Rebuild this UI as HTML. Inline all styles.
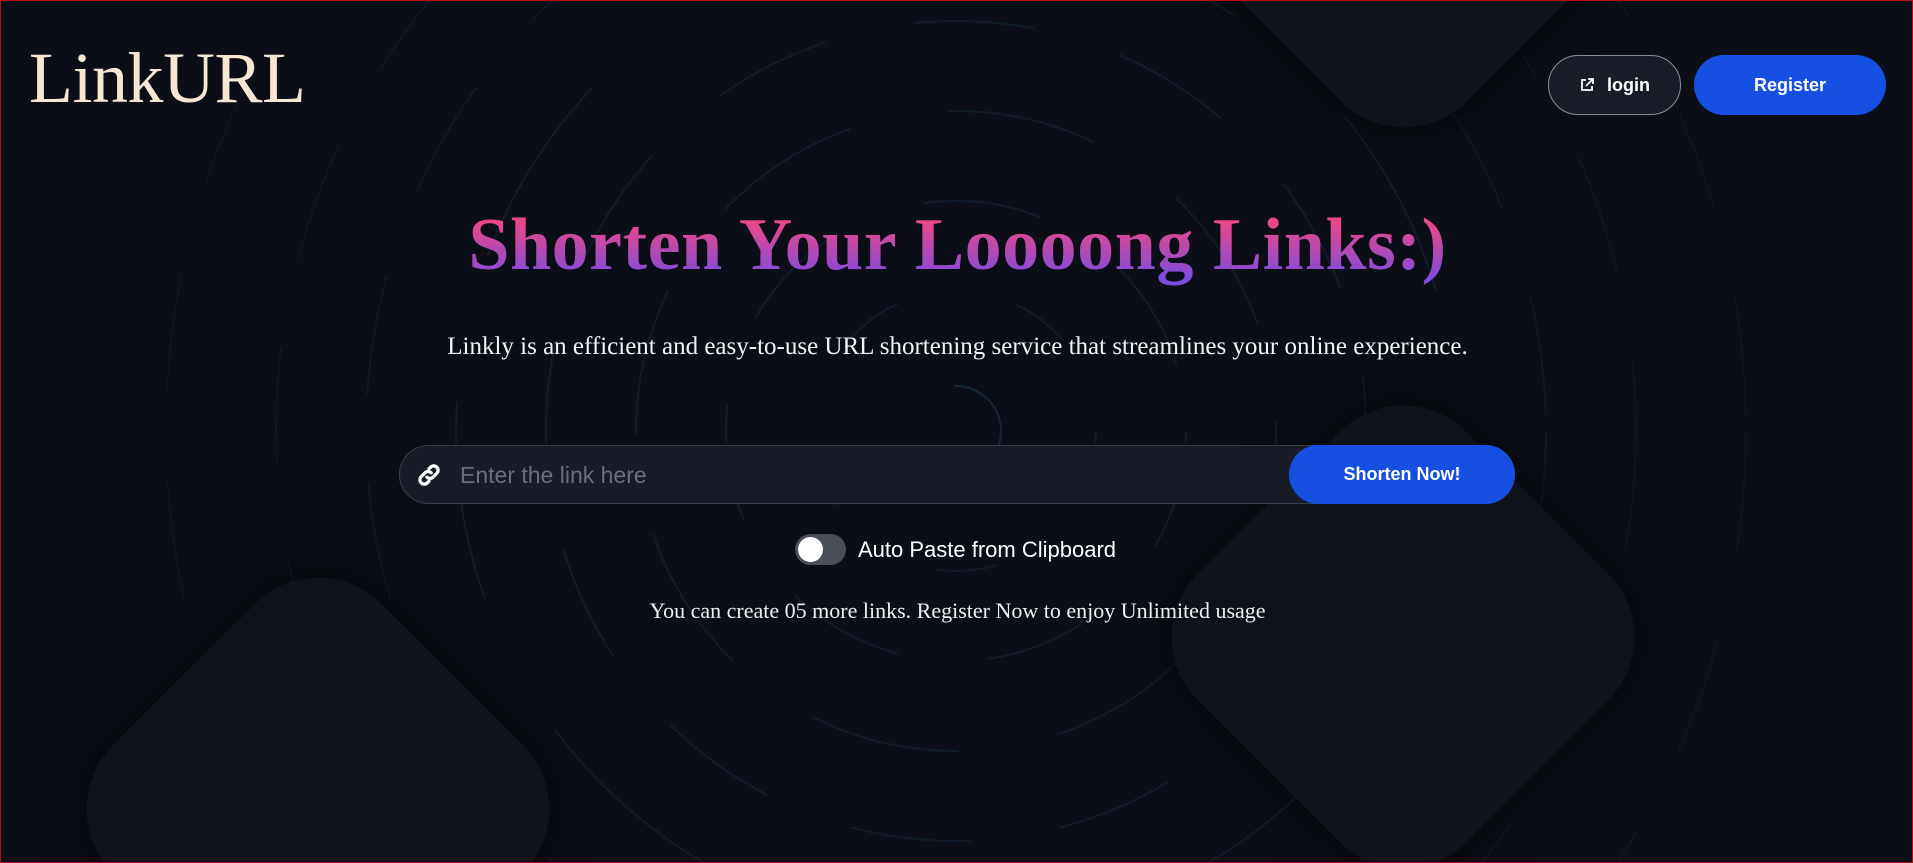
<!DOCTYPE html>
<html><head><meta charset="utf-8"><style>
*{margin:0;padding:0;box-sizing:border-box}
html,body{width:1913px;height:863px;overflow:hidden;background:#0b0e17}
#w{position:relative;width:1913px;height:863px;overflow:hidden;background:#0b0e17;font-family:"Liberation Sans",sans-serif;border:1px solid #b01010}
.d{position:absolute;width:380px;height:380px;background:#0e121b;border-radius:90px;transform:translate(-50%,-50%) rotate(45deg);box-shadow:0 0 40px 10px rgba(0,0,0,.55)}
.logo{position:absolute;left:28px;top:36px;font-family:"Liberation Serif",serif;font-size:72px;color:#f6e6d4;letter-spacing:-0.5px}
.btn{position:absolute;top:54px;height:60px;border-radius:30px;display:flex;align-items:center;justify-content:center;font-weight:bold;font-size:18px;color:#fff}
.login{left:1547px;width:133px;background:#181d28;border:1px solid #8b8f98}
.reg{left:1693px;width:192px;background:#1550e3}
h1{position:absolute;left:0;width:1913px;top:202px;text-align:center;font-family:"Liberation Serif",serif;font-weight:bold;font-size:74px;letter-spacing:0.5px;background:linear-gradient(180deg,#e8488a 25%,#7b4be0 90%);-webkit-background-clip:text;background-clip:text;color:transparent}
.sub{position:absolute;left:0;width:1913px;top:332px;text-align:center;font-family:"Liberation Serif",serif;font-size:25px;color:#f3f3f3}
.inp{position:absolute;left:398px;top:444px;width:1116px;height:59px;border-radius:30px;background:#181c26;border:1px solid #3a3f4a}
.inp span{position:absolute;left:60px;top:16px;font-size:23px;color:#6a6f7a}
.go{position:absolute;left:1288px;top:444px;width:226px;height:59px;border-radius:30px;background:#1550e3;color:#fff;font-weight:bold;font-size:18px;display:flex;align-items:center;justify-content:center}
.tg{position:absolute;left:794px;top:533px;width:51px;height:31px;border-radius:16px;background:#4a4e58}
.tg:after{content:"";position:absolute;left:3px;top:3px;width:25px;height:25px;border-radius:50%;background:#fff}
.tl{position:absolute;left:857px;top:536px;font-size:22px;color:#fff}
.note{position:absolute;left:0;width:1913px;top:597px;text-align:center;font-family:"Liberation Serif",serif;font-size:22px;color:#f0f0f0}
</style></head><body><div id="w">
<svg style="position:absolute;left:0;top:0" width="1913" height="863"><g fill="none" stroke="#111c2b" stroke-width="2" stroke-dasharray="120 90">
<circle cx="955" cy="430" r="45" stroke="#15273b"/><circle cx="955" cy="430" r="140" stroke-dasharray="60 120"/><circle cx="955" cy="430" r="230"/><circle cx="955" cy="430" r="320" stroke-dasharray="150 100"/><circle cx="955" cy="430" r="410"/><circle cx="955" cy="430" r="500" stroke-dasharray="200 150"/><circle cx="955" cy="430" r="590" stroke="#0f1824"/><circle cx="955" cy="430" r="680" stroke="#0f1621"/><circle cx="955" cy="430" r="790" stroke="#0e151f"/></g></svg>
<div class="d" style="left:1403px;top:-105px"></div>
<div class="d" style="left:1402px;top:636px"></div>
<div class="d" style="left:317px;top:808px"></div>
<div class="logo">LinkURL</div>
<div class="btn login"><svg width="16" height="16" viewBox="0 0 16 16" fill="none" stroke="#fff" stroke-width="1.8" style="margin-right:12px"><path d="M7 3H3v10h10V9M9 2h5v5M14 2L7 9"/></svg>login</div>
<div class="btn reg">Register</div>
<h1>Shorten Your Loooong Links:)</h1>
<div class="sub">Linkly is an efficient and easy-to-use URL shortening service that streamlines your online experience.</div>
<div class="inp"><svg style="position:absolute;left:16px;top:16px" width="26" height="26" viewBox="0 0 24 24" fill="none" stroke="#fff" stroke-width="3" stroke-linecap="round"><path d="M10 14a4 4 0 0 0 5.7 0l3.5-3.5a4 4 0 0 0-5.7-5.7L12 6.3"/><path d="M14 10a4 4 0 0 0-5.7 0l-3.5 3.5a4 4 0 0 0 5.7 5.7L12 17.7"/></svg><span>Enter the link here</span></div>
<div class="go">Shorten Now!</div>
<div class="tg"></div>
<div class="tl">Auto Paste from Clipboard</div>
<div class="note">You can create 05 more links. Register Now to enjoy Unlimited usage</div>
</div></body></html>
